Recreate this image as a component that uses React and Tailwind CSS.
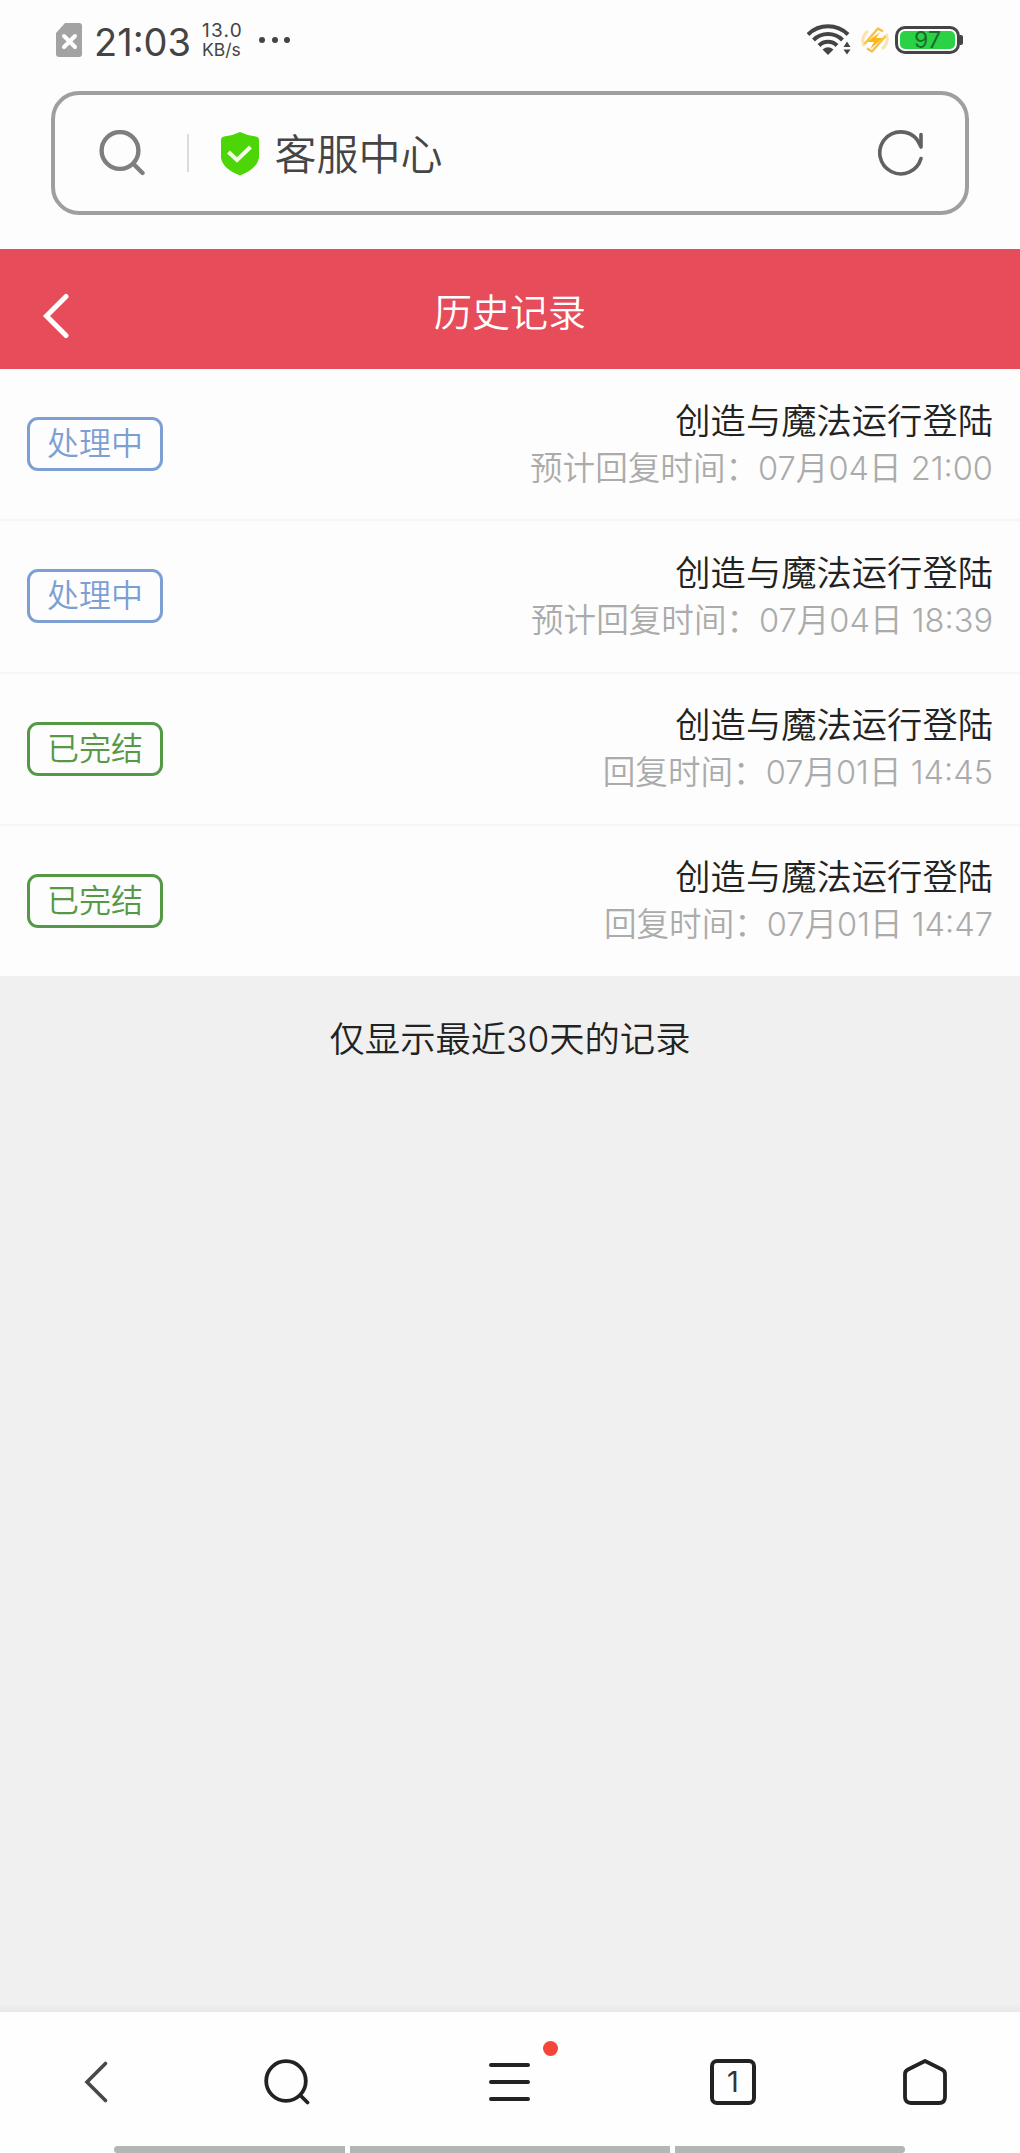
import React from 'react';

const records = [
  { id: 1, status: 'pending', title: '创造与魔法运行登陆', label: '预计回复时间：', time: '07月04日 21:00' },
  { id: 2, status: 'pending', title: '创造与魔法运行登陆', label: '预计回复时间：', time: '07月04日 18:39' },
  { id: 3, status: 'done', title: '创造与魔法运行登陆', label: '回复时间：', time: '07月01日 14:45' },
  { id: 4, status: 'done', title: '创造与魔法运行登陆', label: '回复时间：', time: '07月01日 14:47' },
];

const statusMap = {
  pending: { text: '处理中', cls: 'border-[#7d9fd3] text-[#7d9fd3]' },
  done: { text: '已完结', cls: 'border-[#559846] text-[#559846]' },
};

function StatusBar() {
  return (
    <div className="h-[91px] pl-[56px] pr-[57px] pt-[20px] flex items-start justify-between text-[#444]">
      <div className="flex items-center h-10">
        <svg className="w-[26px] h-[34px]" viewBox="0 0 26 34">
          <path d="M9 0h14a3 3 0 0 1 3 3v28a3 3 0 0 1-3 3H3a3 3 0 0 1-3-3V10z" fill="#a3a3a3" />
          <path d="M8 13l11 11M19 13L8 24" stroke="#fff" strokeWidth="4" strokeLinecap="round" />
        </svg>
        <span className="ml-[12px] w-[95px] text-[38px] leading-10 whitespace-nowrap mt-[3px]">21:03</span>
        <div className="ml-[13px] w-[48px] whitespace-nowrap mt-[1px]">
          <div className="text-[19px] leading-[18px] tracking-[1.2px]">13.0</div>
          <div className="text-[17.5px] leading-[19px]">KB/s</div>
        </div>
        <div className="ml-[9px] flex gap-[6.5px]">
          <i className="w-[6px] h-[6px] rounded-full bg-[#444]" />
          <i className="w-[6px] h-[6px] rounded-full bg-[#444]" />
          <i className="w-[6px] h-[6px] rounded-full bg-[#444]" />
        </div>
      </div>
      <div className="flex items-center h-10">
        <svg className="w-[44px] h-[32px]" viewBox="0 0 44 32" fill="none" stroke="#444" strokeWidth="4">
          <path d="M1 10.5C12-.5 30-.5 41 10.5" />
          <path d="M6.5 16C14.500 8 27.500 8 35.500 16" />
          <path d="M12 21.500C17 16.500 25 16.500 30 21.500" />
          <path d="M15.500 25.500Q21 21 26.500 25.500L21 31z" fill="#444" stroke="none" />
          <path d="M40 17.500l3.500 5.500h-7zM40 30.500l3.500-5h-7z" fill="#444" stroke="none" />
        </svg>
        <svg className="ml-[10px] w-[28px] h-[28px]" viewBox="0 0 28 28" fill="none" strokeLinejoin="round">
          <path d="M7 5A12 12 0 0 0 3 20M21 23a12 12 0 0 0 4-15" stroke="#fbe3b0" strokeWidth="3" />
          <path d="M3.500 18L17 2.500L22 5.500M24.500 10L11 25.500L6 22.500" stroke="#f8c24a" strokeWidth="2.600" />
          <path d="M19 6L6 16h7L9 23 22 12h-7z" fill="#fbb61a" />
        </svg>
        <div className="ml-[6px] w-[65px] h-[28px] rounded-[10px] border-[3px] border-[#444] p-[2px]">
          <div className="h-full rounded-[5px] bg-[#2bd245] text-[#1c6d2c] text-[23px] leading-[19px] text-center">97</div>
        </div>
        <i className="w-[3px] h-[10px] rounded-r-[2px] bg-[#444]" />
      </div>
    </div>
  );
}

function AddressBar() {
  return (
    <div className="mx-[51px] h-[124px] rounded-[28px] border-4 border-[#9f9f9f] flex items-center pl-[44px] pr-[41px] shrink-0">
      <svg className="w-[46px] h-[46px]" viewBox="0 0 46 46" fill="none" stroke="#7e7e7e" strokeWidth="4.400" strokeLinecap="round">
        <circle cx="21" cy="20.500" r="18.400" />
        <path d="M34.500 34L43.500 43" />
      </svg>
      <i className="ml-[42px] w-[1.5px] h-[38px] bg-[#dcdcdc]" />
      <svg className="ml-[31px] w-[40px] h-[44px] mt-[1px]" viewBox="0 0 40 44" fill="none">
        <path d="M20 0Q28 4 36 4.500Q39 5 39 8V26Q37 37 20 43.500Q3 37 1 26V8Q1 5 4 4.500Q12 4 20 0z" fill="#4cd608" />
        <path d="M8.500 20l8.500 8L30.500 15" stroke="#f4ffe9" strokeWidth="4" />
      </svg>
      <span className="ml-[15px] text-[42px] leading-[60px] text-[#454545] font-[350] mt-[3px]">客服中心</span>
      <svg className="ml-auto w-[46px] h-[46px]" viewBox="0 0 46 46" fill="none" stroke="#616161" strokeWidth="3.600" strokeLinecap="round" strokeLinejoin="round">
        <path d="M43 28.500A21 21 0 1 1 39 9.500L43 17V4.500" />
      </svg>
    </div>
  );
}

function RecordRow({ record }) {
  const status = statusMap[record.status];
  return (
    <li className="flex-1 flex items-center justify-between px-[27px] border-b-2 border-[#f6f6f6] last:border-b-0">
      <span className={`w-[136px] h-[54px] rounded-[11px] border-3 text-[32px] leading-[48px] text-center font-[350] ${status.cls}`}>
        {status.text}
      </span>
      <div className="text-right font-[350] pt-px">
        <div className="text-[35.3px] leading-[46px] text-[#222]">{record.title}</div>
        <div className="text-[32.6px] leading-[46px] text-[#ababab]">{record.label}{record.time}</div>
      </div>
    </li>
  );
}

function BottomNav() {
  return (
    <nav className="h-[141px] bg-[#fefefe] pl-[84px] pb-px flex items-center">
      <svg className="w-[26px] h-[46px]" viewBox="0 0 26 46" fill="none" stroke="#484848" strokeWidth="3.600" strokeLinecap="round">
        <path d="M21.500 4.500L3 23L21.500 41.500" />
      </svg>
      <svg className="ml-[154px] w-[46px] h-[46px]" viewBox="0 0 46 46" fill="none" stroke="#222" strokeWidth="3.800" strokeLinecap="round">
        <circle cx="22" cy="22" r="19.800" />
        <path d="M37 37L43.500 43.500" />
      </svg>
      <div className="relative ml-[177px]">
        <svg className="w-[46px] h-[46px]" viewBox="0 0 46 46" stroke="#222" strokeWidth="4" strokeLinecap="round">
          <path d="M4 6h37M4 23h37M4 40h37" />
        </svg>
        <i className="absolute left-[56px] top-[-18px] w-[15px] h-[15px] rounded-full bg-[#f5443a]" />
      </div>
      <div className="ml-[177px] w-[46px] h-[46px] rounded-[7px] border-4 border-[#222] text-[29px] leading-[38px] text-center text-[#333]">1</div>
      <svg className="ml-[146px] w-[46px] h-[48px]" viewBox="0 0 46 48" fill="none" stroke="#222" strokeWidth="3.800" strokeLinejoin="round">
        <path d="M23 3L40 11.500Q43 13 43 16V39Q43 45 37 45H9Q3 45 3 39V16Q3 13 6 11.500z" />
      </svg>
    </nav>
  );
}

export default function App() {
  return (
    <div className="w-[1020px] h-[2153px] overflow-hidden flex flex-col bg-[#fdfdfd] font-['Inter','Noto_Sans_CJK_SC',sans-serif]">
      <StatusBar />
      <AddressBar />
      <header className="mt-[34px] h-[120px] px-[42px] bg-[#e64c5a] grid grid-cols-3 items-center text-white">
        <svg className="w-[28px] h-[46px] mt-[14px]" viewBox="0 0 28 46" fill="none" stroke="#fff" strokeWidth="5" strokeLinecap="round">
          <path d="M24 3.500L4.500 23L24 42.500" />
        </svg>
        <h1 className="text-[38px] leading-[56px] text-center font-[350] mt-[6px]">历史记录</h1>
      </header>
      <ul className="h-[607px] flex flex-col">
        {records.map(r => <RecordRow key={r.id} record={r} />)}
      </ul>
      <main className="flex-1 bg-[#f0f0f0] pt-[38px] flex flex-col justify-between">
        <p className="text-center text-[35.3px] leading-[52px] font-[350] text-[#222]">仅显示最近30天的记录</p>
        <div className="h-[8px] bg-gradient-to-b from-[#f0f0f0] to-[#e8e8e8]" />
      </main>
      <BottomNav />
      {/* Gesture hints */}
      <div className="h-[7px] mt-[-7px] pl-[114px] flex gap-[5px]">
        <i className="w-[231px] bg-[#b5b5b5] rounded-l-full" />
        <i className="w-[320px] bg-[#b5b5b5]" />
        <i className="w-[230px] bg-[#b5b5b5] rounded-r-full" />
      </div>
    </div>
  );
}
